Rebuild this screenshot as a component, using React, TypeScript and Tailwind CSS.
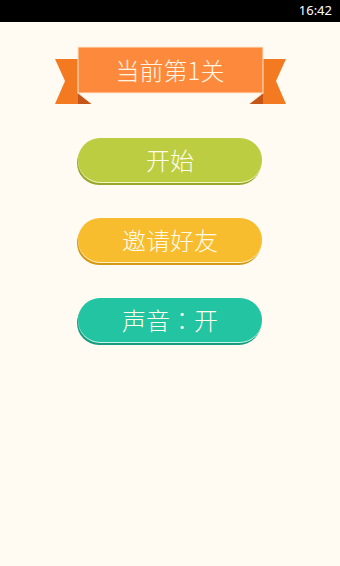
const font = { fontFamily: '"Noto Sans CJK SC", "Noto Sans", sans-serif' };

function Banner() {
  return (
    <div className="relative mx-auto h-[59px] w-[233px]">
      <svg className="absolute inset-0" width="233" height="59" viewBox="0 0 233 59">
        <polygon points="1,13 26,13 26,58 1,58 11,35" fill="#f47a21" />
        <polygon points="232,13 207,13 207,58 232,58 222,35" fill="#f47a21" />
        <polygon points="24,47 38,58 24,58" fill="#c4561a" />
        <polygon points="209,47 195,58 209,58" fill="#c4561a" />
        <line x1="24" y1="47" x2="38" y2="58" stroke="#fde7cf" strokeWidth="1" />
        <line x1="209" y1="47" x2="195" y2="58" stroke="#fde7cf" strokeWidth="1" />
        <rect x="24" y="1" width="185" height="46" fill="#fd8a3c" stroke="#fde7cf" strokeWidth="1" />
      </svg>
      <div
        className="absolute left-[24px] top-[1px] flex h-[46px] w-[185px] items-center justify-center text-[24px] font-light text-[#fff5e3]"
        style={font}
      >
        当前第1关
      </div>
    </div>
  );
}

function Button({ children, className }: { children: React.ReactNode; className: string }) {
  return (
    <button
      className={`mx-auto flex h-[44px] w-[184px] items-center justify-center rounded-full text-[24px] font-light leading-none text-[#fffbea] ${className}`}
      style={font}
    >
      {children}
    </button>
  );
}

export default function App() {
  return (
    <div className="flex h-[566px] w-[340px] flex-col bg-[#fffaf2]">
      <div className="flex h-[22px] items-center justify-end bg-black pr-[8px]">
        <span className="text-[13px] text-white" style={{ fontFamily: '"Noto Sans", sans-serif' }}>
          16:42
        </span>
      </div>
      <div className="mt-[24px]">
        <Banner />
      </div>
      <div className="mt-[33px] flex flex-col gap-[36px]">
        <Button className="bg-[#bdcd42] shadow-[0_1px_0_#f3f6c4,-1px_3px_0_#98a82c]">开始</Button>
        <Button className="bg-[#f7bd2e] shadow-[0_1px_0_#fff1c0,-1px_3px_0_#d49a17]">邀请好友</Button>
        <Button className="bg-[#22c4a1] shadow-[0_1px_0_#c8f3e6,-1px_3px_0_#179c7f]">
          声音
          <span style={{ fontFamily: '"Noto Sans CJK JP", sans-serif' }}>：</span>
          开
        </Button>
      </div>
    </div>
  );
}
